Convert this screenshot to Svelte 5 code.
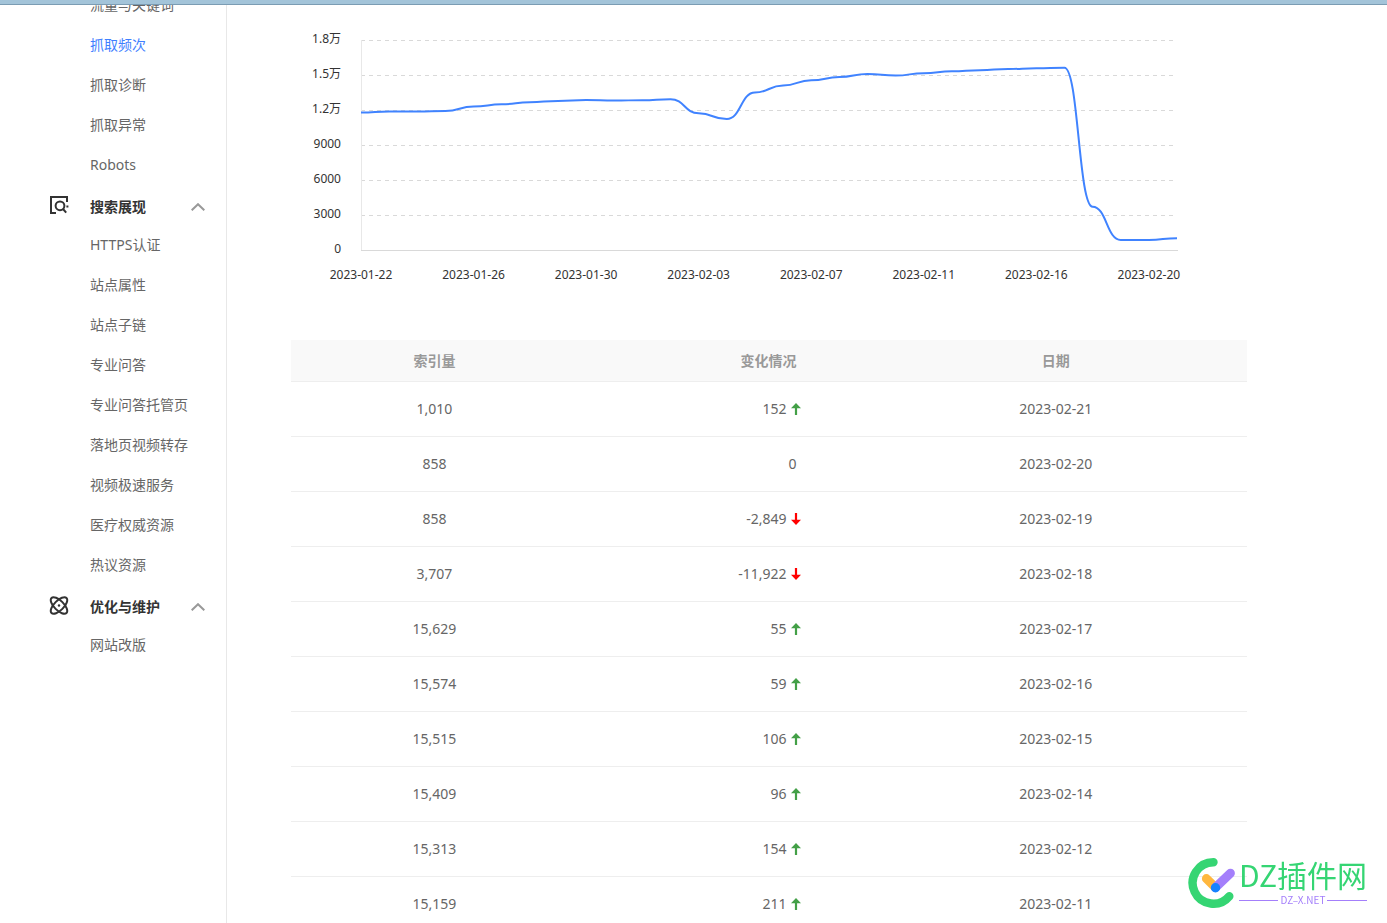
<script>
  const groups = [
    {
      links: ["流量与关键词", "抓取频次", "抓取诊断", "抓取异常", "Robots"],
    },
    {
      title: "搜索展现",
      icon: "search",
      links: [
        "HTTPS认证",
        "站点属性",
        "站点子链",
        "专业问答",
        "专业问答托管页",
        "落地页视频转存",
        "视频极速服务",
        "医疗权威资源",
        "热议资源",
      ],
    },
    {
      title: "优化与维护",
      icon: "atom",
      links: ["网站改版"],
    },
  ];

  const active = "抓取频次";
  let closed = {};

  const rows = [
    { count: "1,010", change: 152, date: "2023-02-21" },
    { count: "858", change: 0, date: "2023-02-20" },
    { count: "858", change: -2849, date: "2023-02-19" },
    { count: "3,707", change: -11922, date: "2023-02-18" },
    { count: "15,629", change: 55, date: "2023-02-17" },
    { count: "15,574", change: 59, date: "2023-02-16" },
    { count: "15,515", change: 106, date: "2023-02-15" },
    { count: "15,409", change: 96, date: "2023-02-14" },
    { count: "15,313", change: 154, date: "2023-02-12" },
    { count: "15,159", change: 211, date: "2023-02-11" },
  ];

  const values = [
    11780, 11870, 11870, 11920, 12300, 12490, 12670, 12770, 12850, 12810,
    12840, 12930, 11715, 11220, 13500, 14100, 14540, 14820, 15080, 14948,
    15159, 15313, 15409, 15515, 15574, 15629, 3707, 858, 858, 1010,
  ];

  const yLabels = ["1.8万", "1.5万", "1.2万", "9000", "6000", "3000", "0"];
  const xLabels = [
    "2023-01-22",
    "2023-01-26",
    "2023-01-30",
    "2023-02-03",
    "2023-02-07",
    "2023-02-11",
    "2023-02-16",
    "2023-02-20",
  ];

  // plot area inside the chart svg
  const left = 70;
  const top = 20;
  const band = 35;
  const bottom = top + band * 6;

  let width = 956;

  $: right = width - 70;
  $: step = (right - left) / (values.length - 1);
  $: line = values
    .map((v, i) => {
      const x = left + i * step;
      const y = bottom - (v / 3000) * band;
      // flat tangent at every point
      return i ? `S${x - step / 2} ${y} ${x} ${y}` : `M${x} ${y}C${x + step / 2} ${y} `;
    })
    .join("")
    .replace(" S", " ");

  function toggle(title) {
    closed = { ...closed, [title]: !closed[title] };
  }
</script>

<div class="page">
  <div class="topbar"></div>
  <div class="body">
    <nav class="sidebar">
      {#each groups as group}
        {#if group.title}
          <button
            class="group"
            aria-expanded={!closed[group.title]}
            on:click={() => toggle(group.title)}
          >
            <svg class="icon" viewBox="0 0 20 20">
              {#if group.icon === "search"}
                <path d="M18 7V2H2v16h5" />
                <circle cx="11" cy="10.8" r="4.4" />
                <path d="M14 14l3.2 3.6M17.4 11.6h2" />
              {:else}
                <ellipse cx="10" cy="10.5" rx="10.6" ry="4.8" transform="rotate(45 10 10.5)" />
                <ellipse cx="10" cy="10.5" rx="10.6" ry="4.8" transform="rotate(-45 10 10.5)" />
                <circle class="dot" cx="10" cy="10.5" r="1.2" />
              {/if}
            </svg>
            <span>{group.title}</span>
            <svg class="chevron" class:down={closed[group.title]} viewBox="0 0 14 8">
              <path d="M0.7 7.3L7 1.2l6.3 6.1" />
            </svg>
          </button>
        {/if}
        {#if !closed[group.title]}
          <ul>
            {#each group.links as link}
              <li><a href="#top" class:active={link === active}>{link}</a></li>
            {/each}
          </ul>
        {/if}
      {/each}
    </nav>

    <main>
      <div class="chart" bind:clientWidth={width}>
        <svg {width} height="280">
          {#each yLabels as label, i}
            <text class="y" x={left - 20} y={top + i * band + 3}>{label}</text>
            {#if i < 6}
              <line class="grid" x1={left} x2={right} y1={top + i * band + 0.5} y2={top + i * band + 0.5} />
            {/if}
          {/each}
          <line class="yaxis" x1={left + 0.5} x2={left + 0.5} y1={top} y2={bottom} />
          <line class="axis" x1={left} x2={right + 1} y1={bottom + 0.5} y2={bottom + 0.5} />
          {#each xLabels as label, i}
            <text class="x" x={left + i * 4 * step} y={bottom + 29}>{label}</text>
          {/each}
          <path class="series" d={line} />
        </svg>
      </div>

      <table>
        <thead>
          <tr>
            <th>索引量</th>
            <th class="change">变化情况</th>
            <th class="date">日期</th>
          </tr>
        </thead>
        <tbody>
          {#each rows as row}
            <tr>
              <td>{row.count}</td>
              <td class="change">
                {row.change.toLocaleString("en-US")}{#if row.change}<svg class="arrow" class:fall={row.change < 0} viewBox="0 0 10 12"><path d="M5 0l5 5.2H6.1V12H3.9V5.2H0z" /></svg>{/if}
              </td>
              <td class="date">{row.date}</td>
            </tr>
          {/each}
        </tbody>
      </table>
    </main>
  </div>

  <div class="watermark">
    <svg viewBox="0 0 48 50">
      <path d="M25.5 4.3A20.7 20.7 0 1 0 41.3 38.2" stroke="#35d573" stroke-width="8.4" />
      <path d="M18.4 20.6L27 29" stroke="#ffb73e" stroke-width="9" />
      <path d="M42.4 15.2L27.5 29.6" stroke="#a47ffb" stroke-width="9" />
      <circle cx="27.5" cy="29.8" r="4.7" fill="#1583ff" />
    </svg>
    <div class="brand">
      <strong>DZ插件网</strong>
      <small>DZ–X.NET</small>
    </div>
  </div>
</div>

<style>
  :global(body) {
    background: #fff;
    color: #666;
    font-family: "Noto Sans", "Noto Sans CJK SC", sans-serif;
    font-size: 14px;
    margin: 0;
  }
  .page {
    display: flex;
    flex-direction: column;
    height: 100vh;
    overflow: hidden;
  }
  .topbar {
    background: #a3c4d9;
    border-bottom: 1px solid #7b9cb3;
    flex: none;
    height: 4px;
  }
  .body {
    display: flex;
    flex: 1;
    min-height: 0;
    overflow: hidden;
  }
  .sidebar {
    border-right: 1px solid #e8e8e8;
    flex: none;
    overflow: hidden;
    width: 226px;
  }
  .sidebar ul {
    list-style: none;
    margin: 0;
    padding: 0;
  }
  .sidebar ul:first-child {
    margin-top: -20px;
  }
  .sidebar a {
    color: #666;
    display: block;
    line-height: 40px;
    height: 40px;
    padding-left: 90px;
    text-decoration: none;
  }
  .sidebar a.active {
    color: #3f80ff;
  }
  .group {
    align-items: center;
    background: none;
    border: 0;
    color: #333;
    cursor: pointer;
    display: flex;
    font: inherit;
    font-weight: 700;
    height: 40px;
    padding: 0 21px 0 49px;
    width: 100%;
  }
  .group span {
    flex: 1;
    line-height: 20px;
    padding: 4px 0 0 21px;
    text-align: left;
  }
  .icon {
    fill: none;
    height: 20px;
    stroke: #333;
    stroke-width: 2;
    width: 20px;
  }
  .icon .dot {
    fill: #333;
    stroke: none;
  }
  .chevron {
    fill: none;
    height: 8px;
    margin-top: 4px;
    stroke: #999;
    stroke-width: 2;
    width: 14px;
  }
  .chevron.down {
    transform: rotate(180deg);
  }
  main {
    flex: 1;
    min-width: 0;
    padding: 15px 140px 0 64px;
  }
  .chart {
    height: 320px;
    overflow: hidden;
  }
  .chart svg {
    display: block;
  }
  .chart text {
    fill: #333;
    font-size: 12px;
  }
  .chart .y {
    text-anchor: end;
  }
  .chart .x {
    text-anchor: middle;
  }
  .chart .grid {
    stroke: #d9d9d9;
    stroke-dasharray: 4 4;
  }
  .chart .yaxis {
    stroke: #e8e8e8;
  }
  .chart .axis {
    stroke: #d9d9d9;
  }
  .series {
    fill: none;
    stroke: #4083ff;
    stroke-width: 2;
  }
  table {
    border-collapse: separate;
    border-spacing: 0;
    table-layout: fixed;
    width: 100%;
  }
  th,
  td {
    border-bottom: 1px solid #eee;
    box-sizing: border-box;
    line-height: 20px;
    padding: 17px 0;
    text-align: center;
    width: 30%;
  }
  th {
    background: #f9f9f9;
    color: #999;
    padding: 11px 0 10px;
  }
  th.change,
  td.change {
    padding-right: 68px;
    text-align: right;
  }
  th.date,
  td.date {
    width: 40%;
  }
  .arrow {
    fill: #43a047;
    height: 12px;
    margin: 0 -4px 0 4px;
    vertical-align: -1px;
    width: 10px;
  }
  .arrow.fall {
    fill: #f00;
    transform: rotate(180deg);
  }
  .watermark {
    bottom: 15px;
    display: flex;
    gap: 3px;
    position: fixed;
    right: 20px;
  }
  .watermark svg {
    fill: none;
    height: 50px;
    stroke-linecap: round;
    width: 48px;
  }
  .brand {
    display: flex;
    flex-direction: column;
    font-family: "Noto Sans CJK SC", sans-serif;
  }
  .brand strong {
    color: #35d573;
    font-size: 30px;
    font-weight: 400;
    line-height: 32px;
  }
  .brand small {
    align-items: center;
    color: #a47ffb;
    display: flex;
    font-size: 10px;
    gap: 2px;
    line-height: 12px;
    margin-top: 4px;
  }
  .brand small::before,
  .brand small::after {
    background: #a47ffb;
    content: "";
    flex: 1;
    height: 1px;
  }
</style>
